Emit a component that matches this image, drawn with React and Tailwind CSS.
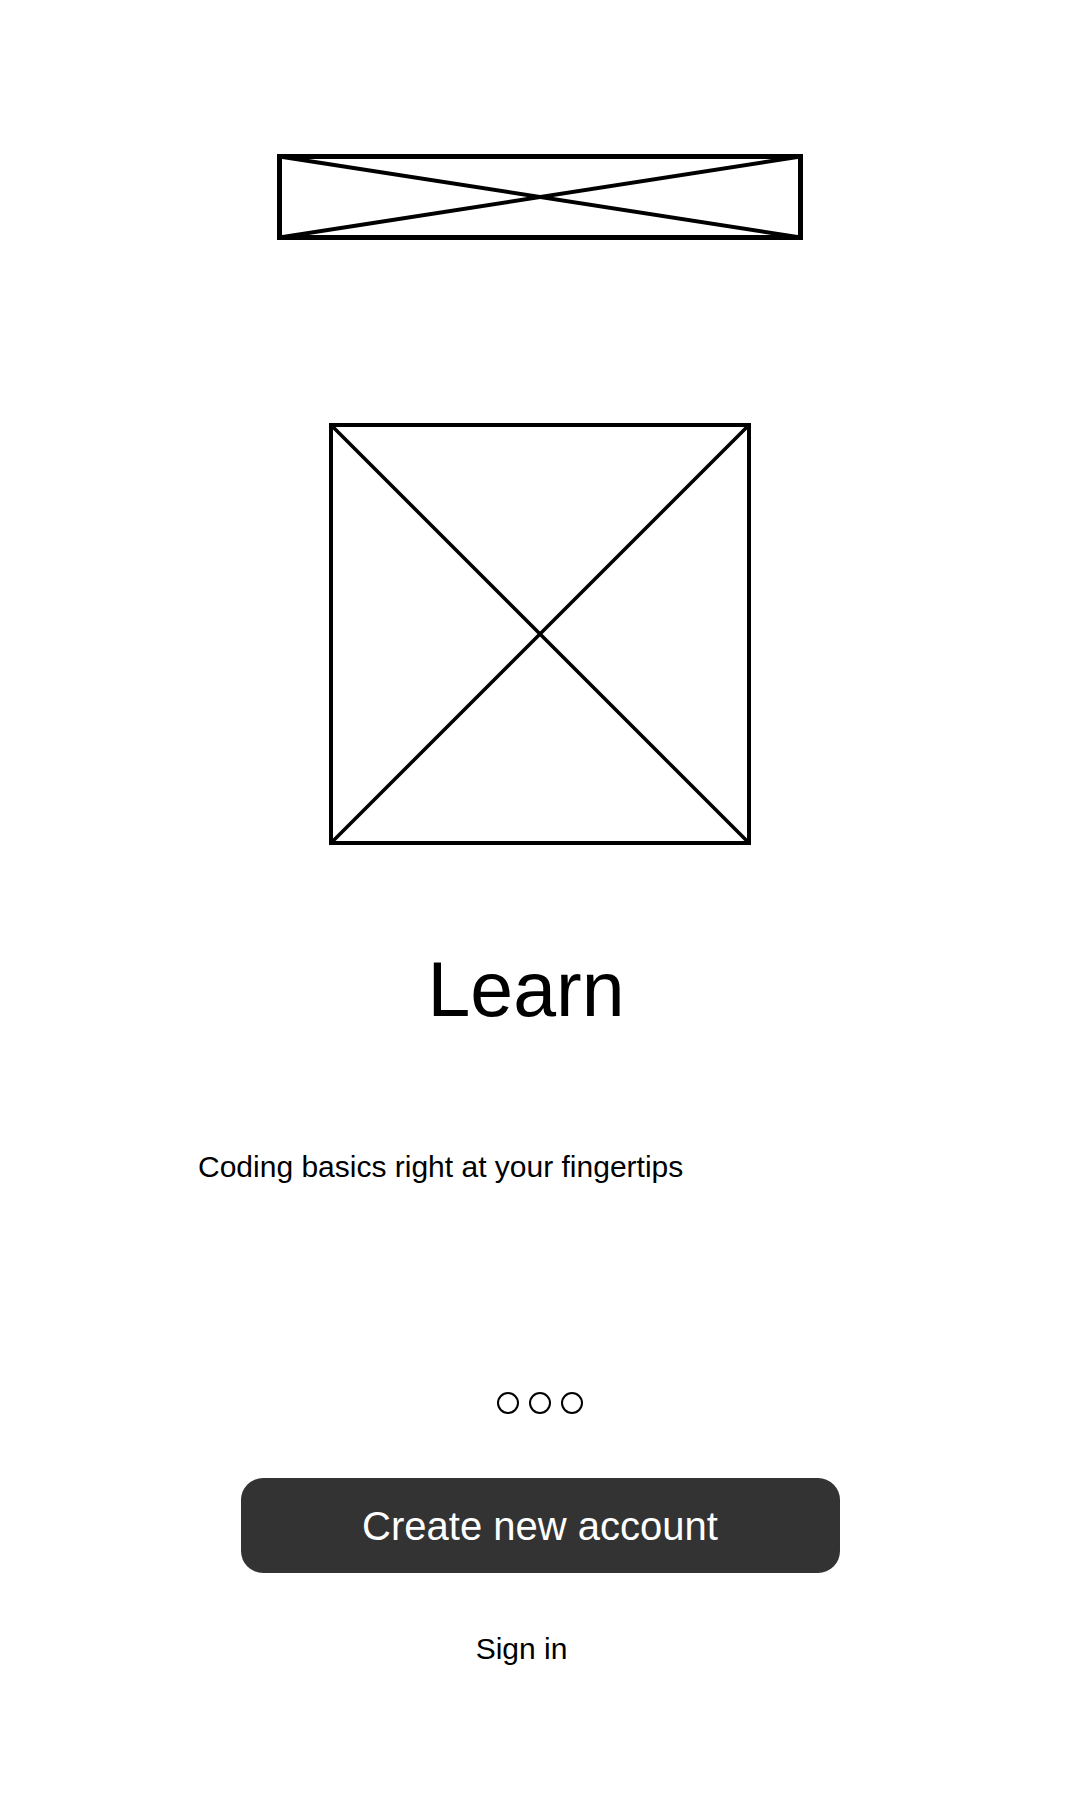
import React from 'react';

function Placeholder({ w, h, border, line }) {
  const o = border / 2;
  return (
    <svg width={w} height={h} viewBox={`0 0 ${w} ${h}`} className="block shrink-0">
      <line x1={o} y1={o} x2={w - o} y2={h - o} stroke="#000" strokeWidth={line} />
      <line x1={o} y1={h - o} x2={w - o} y2={o} stroke="#000" strokeWidth={line} />
      <rect x={o} y={o} width={w - border} height={h - border} fill="none" stroke="#000" strokeWidth={border} />
    </svg>
  );
}

export default function App() {
  return (
    <div className="min-h-[1800px] w-full bg-white text-black flex flex-col items-center font-['Liberation_Sans',Arial,sans-serif]">
      {/* logo placeholder */}
      <div className="mt-[154px]">
        <Placeholder w={526} h={86} border={5} line={4} />
      </div>

      {/* illustration placeholder */}
      <div className="mt-[183px]">
        <Placeholder w={422} h={422} border={4} line={3.5} />
      </div>

      <h1 className="mt-[106px] w-full pr-7 text-center text-[77px] leading-none font-normal">Learn</h1>

      <p className="mt-[124px] w-full pl-[198px] text-[30px] leading-[30px]">
        Coding basics right at your fingertips
      </p>

      {/* pager dots */}
      <div className="mt-[210px] flex items-center gap-[10px]">
        <span className="w-[22px] h-[22px] rounded-full border-[2.5px] border-black"></span>
        <span className="w-[22px] h-[22px] rounded-full border-[2.5px] border-black"></span>
        <span className="w-[22px] h-[22px] rounded-full border-[2.5px] border-black"></span>
      </div>

      <button className="mt-[64px] w-[599px] h-[95px] rounded-[22px] bg-[#333333] text-white text-[40px] leading-none flex items-center justify-center">
        Create new account
      </button>

      <button className="mt-[61px] w-full pr-[37px] text-center text-[30px] leading-[30px]">
        Sign in
      </button>
    </div>
  );
}
